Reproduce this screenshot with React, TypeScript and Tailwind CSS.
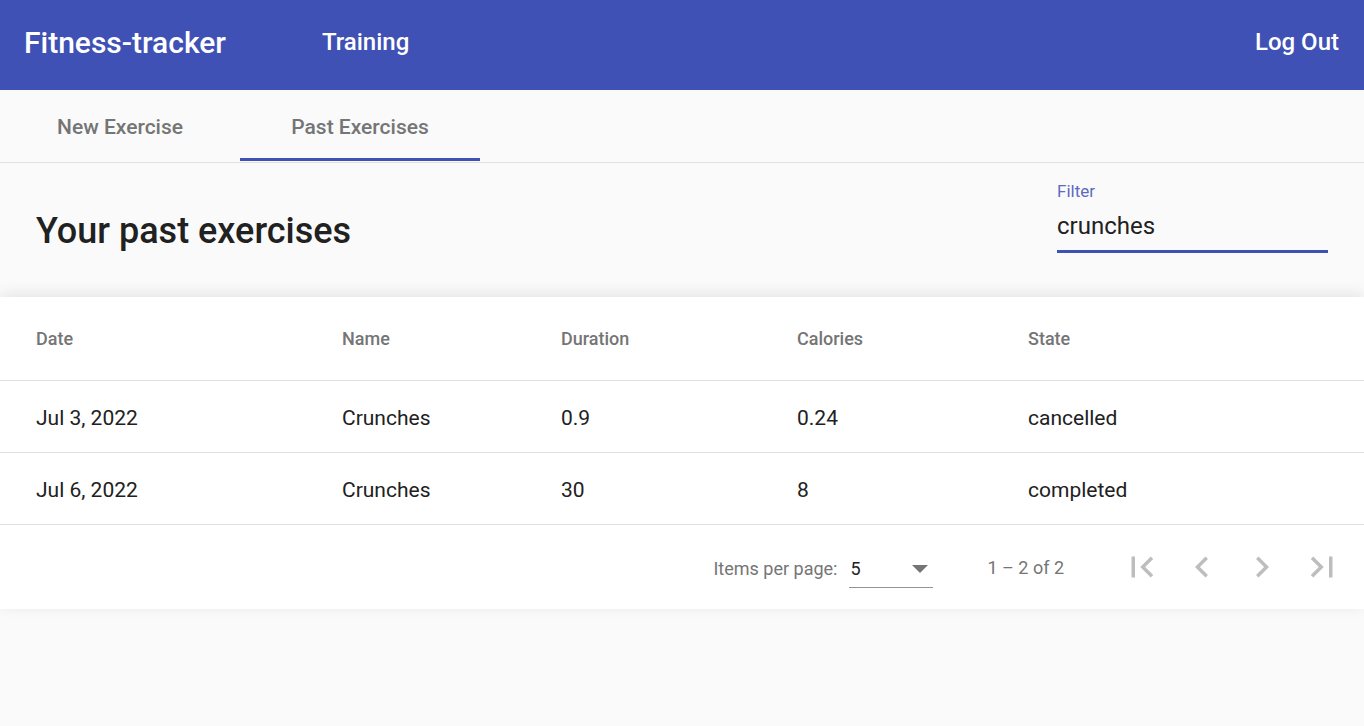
import { ReactNode } from "react";

const rows = [
  { date: "Jul 3, 2022", name: "Crunches", duration: "0.9", calories: "0.24", state: "cancelled" },
  { date: "Jul 6, 2022", name: "Crunches", duration: "30", calories: "8", state: "completed" },
];

const cols = "grid grid-cols-[306px_219px_236px_231px_1fr] pl-[36px] items-center";

const PagerButton = ({ d }: { d: string }) => (
  <button className="w-[60px] h-[60px] flex items-center justify-center cursor-default">
    <svg viewBox="0 0 24 24" className="w-[42px] h-[42px] fill-[#bdbdbd]">
      <path d={d} />
    </svg>
  </button>
);

const Tab = ({ children, active }: { children: ReactNode; active?: boolean }) => (
  <div className="w-[240px] h-[72px] flex items-center justify-center relative pt-[4px] text-[21px] font-medium text-[#757575]">
    {children}
    {active && <div className="absolute left-0 right-0 bottom-[1px] h-[3px] bg-[#3f51b5]"></div>}
  </div>
);

export default function App() {
  return (
    <div className="min-h-[726px] bg-[#fafafa] font-['Roboto',sans-serif]">
      <header className="h-[90px] bg-[#3f51b5] text-white flex items-center px-[24px] pb-[6px]">
        <span className="text-[30px] font-medium">Fitness-tracker</span>
        <span className="ml-[96px] text-[24px] font-medium">Training</span>
        <span className="ml-auto text-[24px] font-medium mr-[1px]">Log Out</span>
      </header>

      <nav className="flex border-b border-[#e0e0e0]">
        <Tab>New Exercise</Tab>
        <Tab active>Past Exercises</Tab>
      </nav>

      <section className="h-[134px] flex items-center justify-between pl-[36px] pr-[36px]">
        <h1 className="text-[36px] font-medium text-[#212121] mt-[1px]">Your past exercises</h1>
        <div className="w-[271px] self-start mt-[20px]">
          <div className="text-[17px] text-[#5c6bc0] leading-none">Filter</div>
          <div className="text-[24px] text-[#212121] leading-none mt-[14px] pb-[12px] border-b-[3px] border-[#3f51b5]">crunches</div>
        </div>
      </section>

      <div className="bg-white shadow-[0_-3px_14px_rgba(0,0,0,0.09)]">
        <div className={`${cols} h-[84px] border-b border-[#e0e0e0] text-[18px] font-medium text-[#757575]`}>
          <div>Date</div>
          <div>Name</div>
          <div>Duration</div>
          <div>Calories</div>
          <div>State</div>
        </div>
        {rows.map((r) => (
          <div key={r.date} className={`${cols} h-[72px] pt-[4px] border-b border-[#e0e0e0] text-[21px] text-[#212121]`}>
            <div>{r.date}</div>
            <div>{r.name}</div>
            <div>{r.duration}</div>
            <div>{r.calories}</div>
            <div>{r.state}</div>
          </div>
        ))}
        <div className="h-[84px] flex items-center justify-end pr-[12px] text-[18px] text-[#757575]">
          <span className="mt-[3px]">Items per page:</span>
          <div className="ml-[12px] w-[84px] h-[38px] border-b border-[#949494] flex items-center justify-between mt-[4px]">
            <span className="text-[#212121] ml-[1px]">5</span>
            <svg viewBox="0 0 10 5" className="w-[16px] h-[8px] fill-[#757575] mr-[5px]">
              <path d="M0 0l5 5 5-5z" />
            </svg>
          </div>
          <span className="ml-[54px] mr-[48px]">1 – 2 of 2</span>
          <PagerButton d="M18.41 16.59L13.82 12l4.59-4.59L17 6l-6 6 6 6zM6 6h2v12H6z" />
          <PagerButton d="M15.41 7.41L14 6l-6 6 6 6 1.41-1.41L10.83 12z" />
          <PagerButton d="M10 6L8.59 7.41 13.17 12l-4.58 4.59L10 18l6-6z" />
          <PagerButton d="M5.59 7.41L10.18 12l-4.59 4.59L7 18l6-6-6-6zM16 6h2v12h-2z" />
        </div>
      </div>
    </div>
  );
}
